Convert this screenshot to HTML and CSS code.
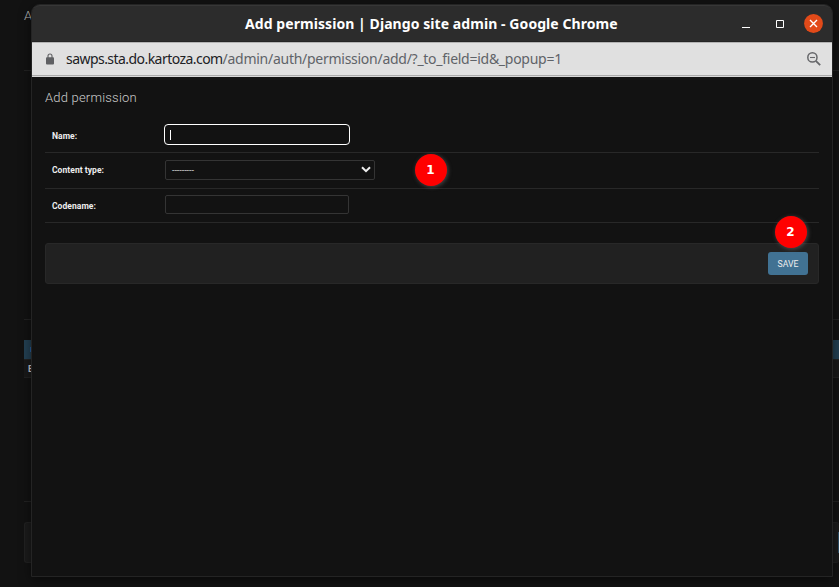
FILE: index.html
```html
<!DOCTYPE html>
<html lang="en">
<head>
<meta charset="utf-8">
<title>Add permission | Django site admin</title>
<link rel="stylesheet" href="styles.css">
</head>
<body>
<div class="page">
  <div class="page-title">A</div>
  <div class="page-section"></div>
  <div class="page-heading">I</div>
  <div class="page-row">E</div>
  <div class="page-space"></div>
  <div class="page-submit"><span class="page-button"></span></div>
</div>
<div class="window">
  <header class="titlebar">
    <div class="window-title">Add permission | Django site admin - Google Chrome</div>
    <div class="controls">
      <svg class="minimize" width="8" height="9" viewBox="0 0 8 9"><path d="M0 8.5h8" stroke="#fff"/></svg>
      <svg class="maximize" width="8" height="8" viewBox="0 0 8 8"><path d="M.5.5h7v7h-7z" fill="none" stroke="#fff"/></svg>
      <svg class="close" width="19" height="19" viewBox="0 0 19 19"><circle cx="9.5" cy="9.5" r="9.4" fill="#e24a19"/><path d="M6 6l7 7M13 6l-7 7" stroke="#fff" stroke-width="1.4"/></svg>
    </div>
  </header>
  <div class="addressbar">
    <svg class="lock" width="8" height="12" viewBox="0 0 8 12"><path d="M2 5V3a2 2 0 0 1 4 0v2" fill="none" stroke="#5f6063" stroke-width="1.1"/><rect y="4.2" width="8" height="7.3" rx="1" fill="#5f6063"/></svg>
    <div class="url"><span class="host">sawps.sta.do.kartoza.com</span><span class="path">/admin/auth/permission/add/?_to_field=id&amp;_popup=1</span></div>
    <svg class="zoom" width="14" height="14" viewBox="0 0 14 14" fill="none" stroke="#66676a"><circle cx="5.4" cy="5.4" r="4.6" stroke-width="1.5"/><path d="M8.8 8.8l4.4 4.4" stroke-width="1.8"/><path d="M3 5.5h5" stroke-width="1.1"/></svg>
  </div>
  <main class="content">
    <h1>Add permission</h1>
    <div class="field name"><span class="label">Name:</span><div class="input focused"><span class="caret"></span></div></div>
    <div class="field type"><span class="label">Content type:</span><div class="select"><span>---------</span><svg width="10" height="7" viewBox="0 0 10 7"><path d="M1 1.2l4 4 4-4" fill="none" stroke="#eee" stroke-width="2"/></svg></div><span class="marker one">1</span></div>
    <div class="field code"><span class="label">Codename:</span><div class="input"></div></div>
    <div class="submit"><div class="save">SAVE</div><span class="marker two">2</span></div>
  </main>
</div>
</body>
</html>
```
FILE: styles.css
```css
* { box-sizing: border-box; }
body {
  margin: 0;
  height: 587px;
  overflow: hidden;
  background: #121212;
  color: #eee;
  font-family: Roboto, sans-serif;
  position: relative;
}
.page { margin-left: 24px; }
.page-title {
  height: 71px;
  padding-top: 8px;
  border-bottom: 1px solid #222;
  font-size: 13px;
  line-height: 16px;
  font-weight: 300;
  color: #bbb;
}
.page-section { height: 249px; border-bottom: 1px solid #222; }
.page-heading {
  height: 19px;
  margin-top: 20px;
  padding-left: 6px;
  background: #234053;
  color: #4fa3c8;
  font-size: 8px;
  line-height: 19px;
}
.page-row {
  height: 19px;
  padding-left: 4px;
  background: #191919;
  border-top: 1px solid #222;
  border-bottom: 1px solid #222;
  font-size: 9px;
  line-height: 18px;
  font-weight: 700;
  color: #ccc;
}
.page-space { height: 124px; border-bottom: 1px solid #222; }
.page-submit {
  height: 41px;
  margin-top: 20px;
  display: flex;
  align-items: center;
  justify-content: flex-end;
  background: #1b1b1b;
  border: 1px solid #222;
  border-right: 0;
  border-radius: 3px;
}
.page-button { width: 1px; height: 21px; background: #2b4d65; }
.window {
  position: absolute;
  left: 31px;
  top: 4px;
  width: 802px;
  height: 573px;
  background: #121212;
  border: 1px solid #242424;
  border-radius: 9px 9px 0 0;
  box-shadow: 0 3px 12px rgba(0, 0, 0, .5);
}
.titlebar {
  height: 37px;
  background: #2c2c2c;
  border-top: 1px solid #373737;
  border-bottom: 1px solid #242424;
  border-radius: 8px 8px 0 0;
  display: grid;
  grid-template-columns: 1fr auto;
}
.window-title {
  padding-left: 213px;
  font: 700 14px/35px "Noto Sans", sans-serif;
  letter-spacing: .07px;
  color: #fff;
  white-space: nowrap;
}
.controls { display: flex; align-items: center; padding-right: 9px; }
.minimize { margin-right: 26px; }
.maximize { margin-right: 20px; }
.addressbar {
  height: 35px;
  display: flex;
  align-items: center;
  padding: 0 11px 0 14px;
  background: #e0e0e0;
  border-top: 1px solid #b3b3b3;
  border-bottom: 1px solid #d8d8d8;
  box-shadow: inset 0 -1px #aaa;
}
.lock, .zoom { margin-bottom: 2px; }
.url {
  flex: 1;
  margin-left: 12px;
  padding-bottom: 2px;
  font: 14px/31px "Noto Sans", sans-serif;
  white-space: nowrap;
}
.host { color: #202124; letter-spacing: -.55px; }
.path { color: #5f6368; letter-spacing: -.27px; }
.content { padding: 0 13px; }
h1 {
  height: 41px;
  margin: 0;
  padding-top: 12px;
  font-size: 13px;
  line-height: 18px;
  font-weight: 300;
  letter-spacing: .2px;
  color: #ccc;
}
.field {
  position: relative;
  display: flex;
  align-items: center;
  padding-left: 7px;
  border-bottom: 1px solid #282828;
}
.name { height: 35px; }
.type { height: 36px; }
.code { height: 34px; }
.label {
  width: 113px;
  font-size: 8.5px;
  line-height: 12px;
  font-weight: 700;
  letter-spacing: .06px;
}
.input {
  width: 184px;
  height: 19px;
  border: 1px solid #343434;
  border-radius: 2px;
}
.focused {
  width: 186px;
  height: 21px;
  margin: 0 0 2px -1px;
  padding: 5px 0 0 5px;
  border-color: #fff;
  border-radius: 4px;
}
.name .label { padding-top: 1px; }
.type .label { margin-bottom: 2px; }
.code .input { margin-bottom: 2px; }
.caret { display: block; width: 1px; height: 10px; background: #fff; }
.select {
  width: 210px;
  height: 20px;
  margin-bottom: 2px;
  padding: 0 3px 0 6px;
  display: flex;
  align-items: center;
  justify-content: space-between;
  border: 1px solid #343434;
  border-radius: 2px;
  font-size: 9px;
  letter-spacing: -.05px;
  color: #ddd;
}
.marker {
  position: absolute;
  width: 32px;
  height: 32px;
  border-radius: 50%;
  background: #f00;
  color: #fff;
  box-shadow: 1px 1px 4px rgba(110, 110, 110, .6);
  font: 700 12px/32px "DejaVu Sans", sans-serif;
  text-align: center;
}
.one { left: 369.5px; top: .5px; }
.two { left: 728.5px; top: -28.5px; }
.submit {
  position: relative;
  height: 41px;
  margin-top: 20px;
  padding-right: 10px;
  display: flex;
  align-items: center;
  justify-content: flex-end;
  background: #212121;
  border: 1px solid #282828;
  border-radius: 3px;
}
.save {
  width: 40px;
  height: 23px;
  border-radius: 3px;
  background: #417293;
  color: #eee;
  font-size: 8.7px;
  line-height: 24px;
  text-align: center;
}
```
